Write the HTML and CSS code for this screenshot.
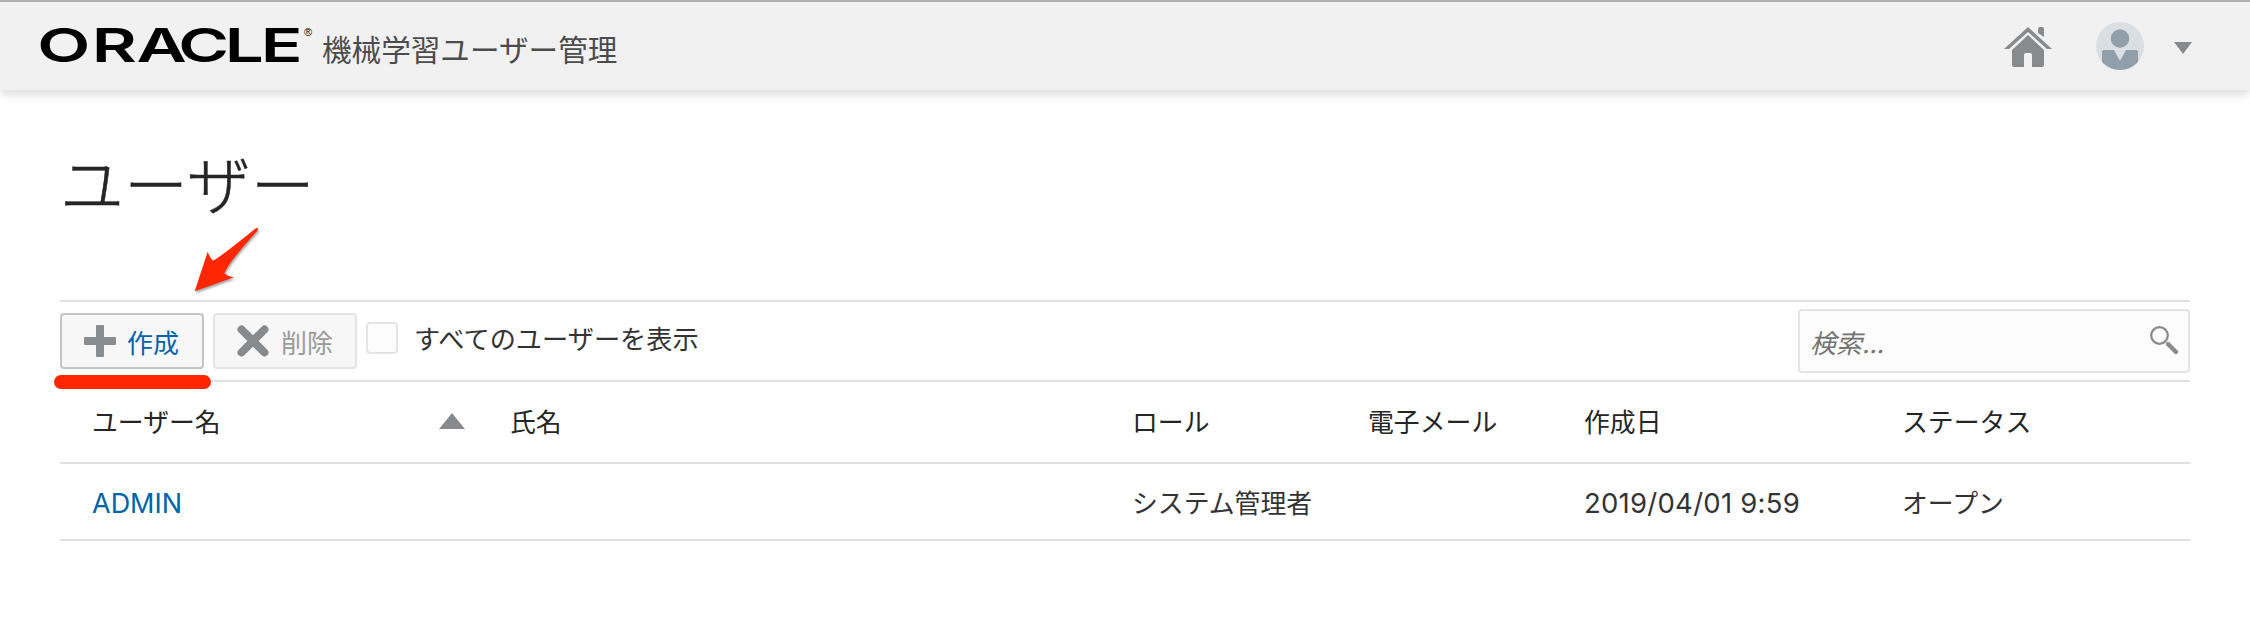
FILE: index.html
```html
<!DOCTYPE html>
<html lang="ja">
<head>
<meta charset="utf-8">
<title>機械学習ユーザー管理</title>
<link rel="stylesheet" href="styles.css">
</head>
<body>
<header class="topbar">
  <svg class="brand" width="262" height="60" viewBox="0 0 262 60">
    <text class="wordmark" transform="scale(1.47 1)" x="-2.500 34.500 65 93.400 125 149.500" y="44">ORACLE</text>
  </svg>
  <span class="registered">®</span>
  <span class="product">機械学習ユーザー管理</span>
  <nav class="tools">
    <svg class="home" width="48" height="42" viewBox="0 0 48 42" fill="#878b8e">
      <path d="M0 22 24 0l24 22h-5L24 5 5 22z"/>
      <path d="M34 6V2q0-2 2-2h2q2 0 2 2v8z"/>
      <path d="M24 8 40 23v15q0 2-2 2H28V28q0-2-2-2h-4q-2 0-2 2v12H10q-2 0-2-2V23z"/>
    </svg>
    <svg class="avatar" width="48" height="48" viewBox="0 0 48 48">
      <defs><clipPath id="disc"><circle cx="24" cy="24" r="24"/></clipPath></defs>
      <g clip-path="url(#disc)">
        <path fill="#d9dfe3" d="M0 0h48v48H0z"/>
        <circle cx="24" cy="16.500" r="9.300" fill="#919fab"/>
        <path fill="#919fab" d="M6 30q0-2 2-2h10l6 11 6-11h10q2 0 2 2v18H6z"/>
      </g>
    </svg>
    <svg class="caret" width="18" height="12" viewBox="0 0 18 12"><path fill="#878b8e" d="M0 0h18L9 12z"/></svg>
  </nav>
</header>
<main class="page">
  <h1 class="title">ユーザー</h1>
  <div class="toolbar">
    <button class="btn btn-create">
      <svg width="32" height="32" viewBox="0 0 32 32"><path fill="#878d91" d="M12 1q0-1 1-1h6q1 0 1 1v11h11q1 0 1 1v6q0 1-1 1H20v11q0 1-1 1h-6q-1 0-1-1V20H1q-1 0-1-1v-6q0-1 1-1h11z"/></svg>
      <span>作成</span>
    </button>
    <button class="btn btn-delete">
      <svg width="32" height="32" viewBox="0 0 32 32"><path stroke="#878b8e" stroke-width="8" stroke-linecap="round" d="M4.500 4.500l23 23M27.500 4.500l-23 23"/></svg>
      <span>削除</span>
    </button>
    <label class="show-all"><span class="box"></span><span class="show-text">すべてのユーザーを表示</span></label>
    <div class="search">
      <span class="placeholder">検索...</span>
      <svg width="28" height="28" viewBox="0 0 28 28" fill="none" stroke="#878b8e"><circle cx="9.500" cy="9.500" r="8.300" stroke-width="2.200"/><path d="M18 18l8 8" stroke-width="4.400" stroke-linecap="round"/></svg>
    </div>
  </div>
  <div class="row head">
    <span class="sortable">ユーザー名<svg width="26" height="16" viewBox="0 0 26 16"><path fill="#878b8e" d="M13 0l13 16H0z"/></svg></span>
    <span>氏名</span><span>ロール</span><span>電子メール</span><span>作成日</span><span>ステータス</span>
  </div>
  <div class="row record">
    <a class="user">ADMIN</a><span></span><span>システム管理者</span><span></span><span class="date">2019/04/01 9:59</span><span>オープン</span>
  </div>
</main>
<svg class="arrow" width="74" height="76" viewBox="0 0 74 76"><path fill="#ff2600" d="M4.700 66.300 17.700 26.700q2 6 5 9Q28 34 65.500 3.500q3-1.500 2.500 1.500Q38 38 34.300 48.300q4 3.500 9.700 4z"/></svg>
<div class="underline"></div>
</body>
</html>
```
FILE: styles.css
```css
* { box-sizing: border-box; }
body {
  margin: 0;
  height: 632px;
  overflow: hidden;
  background: #fff;
  color: #333;
  font-family: "Noto Sans CJK JP", sans-serif;
  font-size: 25.85px;
}
svg { display: block; flex: none; overflow: visible; }
.topbar {
  display: flex;
  align-items: flex-start;
  height: 90px;
  padding: 0 58px 0 41px;
  border-top: 2px solid #b0b0b0;
  background: #f1f1f1;
  box-shadow: 0 6px 8px -1px rgba(0, 0, 0, .13);
}
.brand { margin-top: 16px; }
.wordmark { font: 600 47px Inter, sans-serif; fill: #000; }
.registered {
  width: 10px;
  margin: 22px 8px 0 1px;
  color: #000;
  font: 11px/16px "Liberation Sans", sans-serif;
}
.product {
  margin-top: 25px;
  color: #4c4c4c;
  font-size: 29.6px;
  line-height: 44px;
  white-space: nowrap;
}
.tools { display: flex; margin-left: auto; }
.home { margin-top: 25px; }
.avatar { margin: 20px 30px 0 44px; }
.caret { margin-top: 40px; }
.page { padding: 55px 60px 0; }
.title {
  margin: 0;
  height: 155px;
  color: #252525;
  font-size: 64px;
  font-weight: 300;
  line-height: 72px;
  -webkit-text-stroke: .5px #252525;
}
.toolbar {
  display: flex;
  align-items: flex-start;
  height: 82px;
  border-top: 2px solid #e0e0e0;
  border-bottom: 2px solid #e0e0e0;
}
.btn {
  display: flex;
  align-items: center;
  width: 144px;
  height: 56px;
  margin: 11px 9px 0 0;
  padding: 0 0 0 22px;
  gap: 12px;
  border: 2px solid #e4e4e4;
  border-radius: 4px;
  background: #f7f7f7;
  color: #9b9b9b;
  font: 26px/36px "Noto Sans CJK JP", sans-serif;
}
.btn span { padding-top: 1px; }
.btn-create { gap: 11px; border-color: #c4c4c4; color: #0064a8; }
.show-all { display: flex; margin-top: 20px; }
.box { width: 32px; height: 32px; border: 2px solid #e4e4e4; border-radius: 4px; background: #fcfcfc; }
.show-text { margin-left: 16px; font-size: 26.2px; line-height: 32px; }
.search {
  display: flex;
  justify-content: space-between;
  width: 392px;
  height: 64px;
  margin: 7px 0 0 auto;
  padding: 15px 10px 0 10px;
  border: 2px solid #e4e4e4;
  border-radius: 4px;
  background: #fcfcfc;
}
.placeholder { color: #737373; font-size: 26px; font-style: italic; line-height: 32px; }
.row {
  display: grid;
  grid-template-columns: 418px 622px 236px 216px 318px 1fr;
  padding-left: 32px;
  border-bottom: 2px solid #e0e0e0;
}
.head { height: 82px; color: #252525; line-height: 78px; }
.record { height: 77px; line-height: 75px; }
.sortable { display: flex; justify-content: space-between; padding-right: 45px; }
.sortable svg { margin-top: 31px; }
.user, .date { padding-top: 3px; font-family: Inter, sans-serif; font-size: 27px; line-height: 73px; }
.user { color: #0064a8; }
.date { font-size: 27.5px; letter-spacing: .25px; }
.arrow { position: absolute; left: 190px; top: 225px; filter: drop-shadow(1px 2px 1px rgba(0, 0, 0, .35)); }
.underline { position: absolute; left: 54px; top: 375px; width: 157px; height: 14px; border-radius: 7px; background: #ff2600; }
```
